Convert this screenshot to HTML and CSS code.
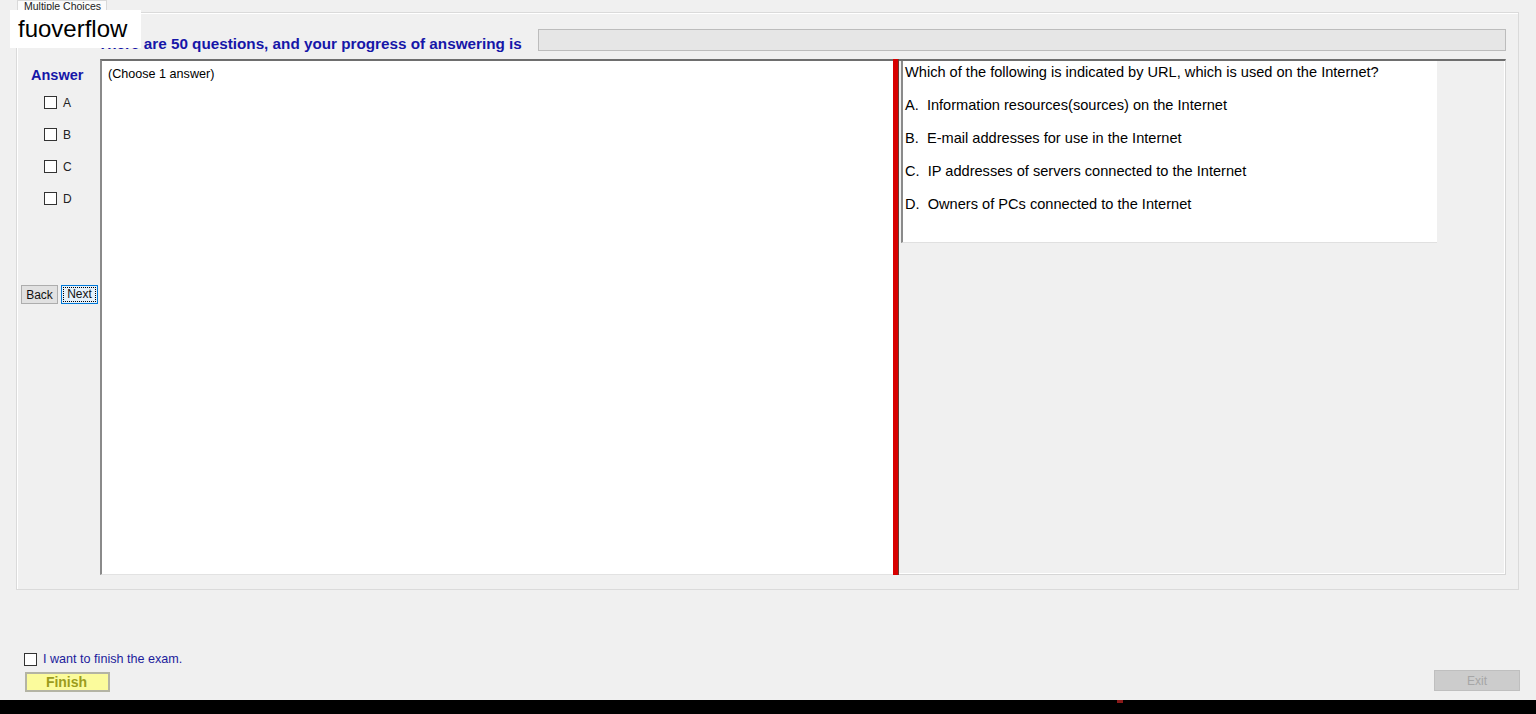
FILE: index.html
```html
<!DOCTYPE html>
<html lang="en">
<head>
  <meta charset="UTF-8">
  <title>Multiple Choices</title>
  <link rel="stylesheet" href="styles.css">
</head>
<body>
  <div class="watermark">fuoverflow</div>

  <div class="tab-strip">
    <div class="tab">Multiple Choices</div>
  </div>

  <div class="tab-page">
    <div class="status-row">
      <span class="status-text">There are 50 questions, and your progress of answering is</span>
      <div class="progress"></div>
    </div>

    <div class="work-row">
      <div class="answer-col">
        <div class="answer-title">Answer</div>
        <ul class="answer-list">
          <li><span class="box"></span>A</li>
          <li><span class="box"></span>B</li>
          <li><span class="box"></span>C</li>
          <li><span class="box"></span>D</li>
        </ul>
        <div class="nav-buttons">
          <button class="btn">Back</button>
          <button class="btn btn-focus"><span>Next</span></button>
        </div>
      </div>

      <div class="answer-pane">(Choose 1 answer)</div>

      <div class="splitter"></div>

      <div class="question-pane">
        <div class="question-box">
          <p>Which of the following is indicated by URL, which is used on the Internet?</p>
          <p>A.  Information resources(sources) on the Internet</p>
          <p>B.  E-mail addresses for use in the Internet</p>
          <p>C.  IP addresses of servers connected to the Internet</p>
          <p>D.  Owners of PCs connected to the Internet</p>
        </div>
      </div>
    </div>
  </div>

  <div class="footer-area">
    <div class="finish-group">
      <label class="finish-check"><span class="box"></span>I want to finish the exam.</label>
      <button class="btn-finish">Finish</button>
    </div>
    <button class="btn-exit" disabled>Exit</button>
  </div>

  <div class="taskbar"><span class="taskbar-mark"></span></div>
</body>
</html>
```

FILE: styles.css
```css
* {
  box-sizing: border-box;
}
body {
  margin: 0;
  width: 1536px;
  height: 714px;
  background: #f0f0f0;
  font-family: "Liberation Sans", Arial, sans-serif;
  color: #000;
  display: flex;
  flex-direction: column;
  overflow: hidden;
  position: relative;
}
.watermark {
  position: absolute;
  left: 10px;
  top: 10px;
  width: 131px;
  height: 38px;
  background: #fff;
  font-size: 24px;
  line-height: 38px;
  padding-left: 8px;
  z-index: 2;
}
.tab-strip {
  height: 12px;
  padding-left: 17px;
}
.tab {
  width: 90px;
  height: 13px;
  border: 1px solid #d9d9d9;
  border-bottom: none;
  background: #fbfbfb;
  font-size: 10.5px;
  line-height: 10px;
  padding-left: 6px;
  overflow: hidden;
  color: #222;
}
.tab-page {
  margin: 0 17px 0 16px;
  height: 578px;
  border: 1px solid #dadada;
  box-shadow: inset 1px 1px 0 #fff;
  padding: 16px 12px 14px 0;
  display: flex;
  flex-direction: column;
}
.status-row {
  display: flex;
  align-items: flex-end;
  height: 22px;
  padding-left: 81px;
}
.status-text {
  font-size: 15.25px;
  font-weight: bold;
  color: #1616a8;
  line-height: 17px;
  margin-bottom: -1px;
}
.progress {
  flex: 1;
  height: 22px;
  margin-left: 16px;
  background: #e6e6e6;
  border: 1px solid #bcbcbc;
}
.work-row {
  margin-top: 8px;
  height: 516px;
  display: grid;
  grid-template-columns: 83px 793px 6px 1fr;
}
.answer-col {
  display: flex;
  flex-direction: column;
}
.answer-title {
  margin-top: 8px;
  padding-left: 14px;
  font-size: 14.5px;
  font-weight: bold;
  color: #1616a8;
  line-height: 17px;
}
.answer-list {
  list-style: none;
  margin: 12px 0 0;
  padding: 0 0 0 27px;
  display: flex;
  flex-direction: column;
  gap: 19px;
}
.answer-list li {
  display: flex;
  align-items: center;
  gap: 6px;
  height: 13px;
  font-size: 12px;
  color: #222;
}
.box {
  display: inline-block;
  width: 13px;
  height: 13px;
  background: #fff;
  border: 1px solid #333;
  flex: none;
}
.nav-buttons {
  margin-top: 80px;
  padding-left: 4px;
  display: flex;
  gap: 3px;
}
.btn {
  width: 37px;
  height: 19px;
  padding: 0;
  background: #e1e1e1;
  border: 1px solid #adadad;
  font-family: "Liberation Sans", Arial, sans-serif;
  font-size: 12px;
  color: #111;
}
.btn-focus {
  background: #e5f1fb;
  border-color: #0078d7;
  padding: 1px;
}
.btn-focus span {
  display: block;
  height: 100%;
  border: 1px dotted #000;
  line-height: 13px;
}
.answer-pane {
  background: #fff;
  border-top: 2px solid #6e6e6e;
  border-left: 2px solid #8a8a8a;
  border-bottom: 1px solid #e2e2e2;
  font-size: 12.6px;
  padding: 6px 6px;
}
.splitter {
  background: #d80000;
  border-right: 1px solid #6b3a30;
}
.question-pane {
  border-top: 2px solid #6e6e6e;
  border-right: 1px solid #d6d6d6;
  border-bottom: 1px solid #d6d6d6;
  box-shadow: inset -1px -1px 0 #fff;
  padding: 0 0 0 2px;
}
.question-box {
  width: 536px;
  height: 182px;
  background: #fff;
  border-left: 2px solid #8a8a8a;
  border-bottom: 1px solid #e0e0e0;
  padding: 3px 2px;
}
.question-box p {
  margin: 0 0 16px;
  font-size: 14.6px;
  line-height: 17px;
  white-space: pre;
}
.footer-area {
  flex: 1;
  display: flex;
  justify-content: space-between;
  align-items: flex-end;
  padding: 0 16px 8px 24px;
}
.finish-group {
  display: flex;
  flex-direction: column;
  gap: 6px;
}
.finish-check {
  display: flex;
  align-items: center;
  gap: 6px;
  font-size: 12.6px;
  color: #1c1c9c;
  height: 14px;
}
.btn-finish {
  margin-left: 1px;
  width: 85px;
  height: 20px;
  padding: 0 2px 0 0;
  background: #fbfb9c;
  border: 2px solid #b4b4a4;
  font-family: "Liberation Sans", Arial, sans-serif;
  font-size: 14px;
  font-weight: bold;
  color: #9c9c1c;
}
.btn-exit {
  width: 86px;
  height: 21px;
  padding: 0;
  margin-bottom: 1px;
  background: #cccccc;
  border: 1px solid #bfbfbf;
  font-family: "Liberation Sans", Arial, sans-serif;
  font-size: 12px;
  color: #a6a6a6;
}
.taskbar {
  height: 14px;
  background: #000;
  position: relative;
}
.taskbar-mark {
  display: block;
  width: 6px;
  height: 3px;
  margin-left: 1117px;
  background: #8b1a1a;
}
```
